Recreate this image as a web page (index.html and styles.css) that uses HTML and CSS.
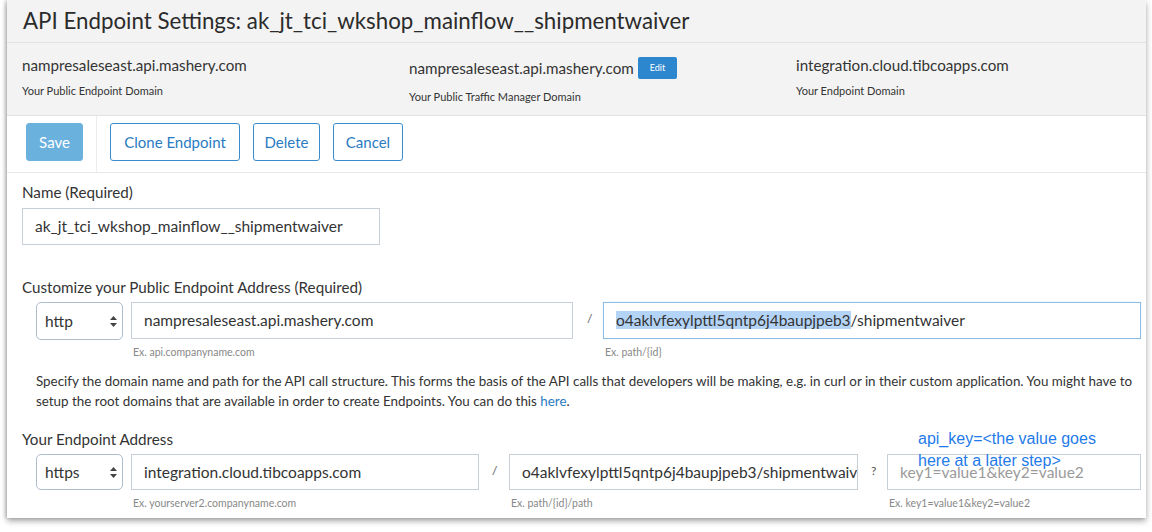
FILE: index.html
```html
<!DOCTYPE html>
<html>
<head>
<meta charset="utf-8">
<link rel="stylesheet" href="styles.css">
</head>
<body>
<div class="frame">
  <div class="window">
    <div class="titlebar">API Endpoint Settings: ak_jt_tci_wkshop_mainflow__shipmentwaiver</div>
    <div class="domains">
      <div class="dcol">
        <div class="dval">nampresaleseast.api.mashery.com</div>
        <div class="dlabel">Your Public Endpoint Domain</div>
      </div>
      <div class="dcol">
        <div class="dval dval-edit">nampresaleseast.api.mashery.com <span class="edit">Edit</span></div>
        <div class="dlabel">Your Public Traffic Manager Domain</div>
      </div>
      <div class="dcol">
        <div class="dval">integration.cloud.tibcoapps.com</div>
        <div class="dlabel">Your Endpoint Domain</div>
      </div>
    </div>
    <div class="toolbar">
      <div class="savewrap"><span class="btn btn-save">Save</span></div>
      <div class="btns">
        <span class="btn btn-outline btn-clone">Clone Endpoint</span>
        <span class="btn btn-outline btn-delete">Delete</span>
        <span class="btn btn-outline btn-cancel">Cancel</span>
      </div>
    </div>
    <div class="form">
      <div class="label">Name (Required)</div>
      <div class="input name-input">ak_jt_tci_wkshop_mainflow__shipmentwaiver</div>

      <div class="label label-gap">Customize your Public Endpoint Address (Required)</div>
      <div class="row row1">
        <div class="select">http<svg class="arrows" width="7" height="11" viewBox="0 0 7 11"><path d="M3.5 0 L7 4 L0 4 Z M3.5 11 L7 7 L0 7 Z" fill="#444"/></svg></div>
        <div class="cell">
          <div class="input">nampresaleseast.api.mashery.com</div>
          <div class="hint">Ex. api.companyname.com</div>
        </div>
        <div class="sep">/</div>
        <div class="cell">
          <div class="input focused"><span class="sel">o4aklvfexylpttl5qntp6j4baupjpeb3</span>/shipmentwaiver</div>
          <div class="hint">Ex. path/{id}</div>
        </div>
      </div>
      <p class="desc">Specify the domain name and path for the API call structure. This forms the basis of the API calls that developers will be making, e.g. in curl or in their custom application. You might have to setup the root domains that are available in order to create Endpoints. You can do this <a class="link">here</a>.</p>

      <div class="label">Your Endpoint Address</div>
      <div class="row row2">
        <div class="select">https<svg class="arrows" width="7" height="11" viewBox="0 0 7 11"><path d="M3.5 0 L7 4 L0 4 Z M3.5 11 L7 7 L0 7 Z" fill="#444"/></svg></div>
        <div class="cell">
          <div class="input">integration.cloud.tibcoapps.com</div>
          <div class="hint">Ex. yourserver2.companyname.com</div>
        </div>
        <div class="sep">/</div>
        <div class="cell">
          <div class="input clip">o4aklvfexylpttl5qntp6j4baupjpeb3/shipmentwaiver</div>
          <div class="hint">Ex. path/{id}/path</div>
        </div>
        <div class="sep">?</div>
        <div class="cell query">
          <div class="input placeholder">key1=value1&amp;key2=value2</div>
          <div class="hint">Ex. key1=value1&amp;key2=value2</div>
          <div class="annotation">api_key=&lt;the value goes<br>here at a later step&gt;</div>
        </div>
      </div>
    </div>
  </div>
</div>
</body>
</html>
```

FILE: styles.css
```css
* { box-sizing: border-box; }
html, body { margin: 0; padding: 0; background: #fff; }
body {
  width: 1152px;
  height: 532px;
  overflow: hidden;
  font-family: Lato, "Open Sans", sans-serif;
  color: #333;
}
.frame {
  padding: 0 6px 0 7px;
}
.window {
  width: 1139px;
  height: 518px;
  background: #fff;
  overflow: hidden;
  box-shadow: 0 3px 6px rgba(0,0,0,0.35), -2px 0 3px rgba(0,0,0,0.15);
}
.titlebar {
  height: 43px;
  background: #f3f3f3;
  border-bottom: 1px solid #e2e2e2;
  font-size: 22.3px;
  line-height: 42px;
  padding-left: 16px;
  color: #2b2b2b;
}
.domains {
  display: grid;
  grid-template-columns: 387px 387px 1fr;
  background: #f3f3f3;
  border-bottom: 1px solid #e2e2e2;
  padding: 12px 0 8px 15px;
  height: 73px;
}
.dval {
  font-size: 15.2px;
  line-height: 20px;
  height: 20px;
  color: #333;
  display: flex;
  align-items: center;
}
.dval-edit { height: 26px; margin-top: 0; }
.edit {
  display: inline-block;
  margin-left: 4px;
  background: #2d87cf;
  color: #fff;
  font-size: 9px;
  line-height: 22px;
  height: 22px;
  padding: 0 12px;
  border-radius: 2px;
}
.dlabel {
  font-size: 11px;
  line-height: 16px;
  margin-top: 8px;
  color: #333;
}
.toolbar {
  display: flex;
  height: 57px;
  border-bottom: 1px solid #e8e8e8;
}
.savewrap {
  width: 90px;
  border-right: 1px solid #ececec;
  padding: 7px 0 0 19px;
}
.btns {
  display: flex;
  gap: 13px;
  padding: 7px 0 0 13px;
}
.btn {
  display: inline-block;
  height: 38px;
  line-height: 36px;
  font-size: 15px;
  border-radius: 3px;
  text-align: center;
}
.btn-save {
  width: 57px;
  background: #6bb1de;
  border: 1px solid #6bb1de;
  color: #fff;
}
.btn-outline {
  border: 1px solid #3a8ccd;
  color: #2a7bc2;
}
.btn-clone { width: 130px; }
.btn-delete { width: 67px; }
.btn-cancel { width: 70px; }
.form {
  padding: 9px 5px 0 15px;
}
.label {
  font-size: 15.2px;
  line-height: 20px;
  color: #333;
}
.label-gap { margin-top: 32px; }
.input {
  height: 37px;
  border: 1px solid #c9cfd6;
  font-size: 15.5px;
  line-height: 35px;
  padding-left: 12px;
  color: #333;
  white-space: nowrap;
  overflow: hidden;
}
.name-input {
  width: 358px;
  margin-top: 6px;
}
.row {
  display: grid;
  margin-top: 5px;
  margin-left: 14px;
  align-items: start;
}
.row1 { grid-template-columns: 87px 450px 30px 538px; }
.row1 > .cell:nth-child(2) { margin-left: 8px; }
.row2 { grid-template-columns: 87px 356px 30px 349px 29px 254px; margin-top: 5px; }
.row2 > .cell:nth-child(2) { margin-left: 8px; }
.select {
  height: 38px;
  border: 1px solid #aebdcd;
  border-radius: 5px;
  font-size: 15.5px;
  line-height: 36px;
  padding-left: 8px;
  display: flex;
  align-items: center;
  justify-content: space-between;
  padding-right: 4px;
}
.row2 .select, .row2 .input { height: 36px; line-height: 34px; }
.arrows { margin-right: 1px; }
.sep {
  font-size: 12px;
  color: #555;
  padding-left: 14px;
  line-height: 34px;
}
.row2 .sep { padding-left: 13px; }
.cell { position: relative; }
.hint {
  font-size: 10.5px;
  color: #888;
  line-height: 12px;
  margin-top: 7px;
  padding-left: 2px;
}
.focused {
  border: 1px solid #8ebfe9;
  box-shadow: 0 0 1px #b8d8f3;
}
.sel { background: #b3d4f7; }
.placeholder { color: #9a9a9a; }
.clip { padding-right: 0; }
.desc {
  font-size: 13.4px;
  line-height: 19.5px;
  margin: 14px 0 18px 14px;
  color: #333;
}
.link { color: #2a7bc2; }
.query { position: relative; }
.annotation {
  position: absolute;
  left: 31px;
  top: -26px;
  font-family: "Liberation Sans", Arial, sans-serif;
  font-size: 16px;
  line-height: 22px;
  color: #1f7be9;
  white-space: nowrap;
}
```
